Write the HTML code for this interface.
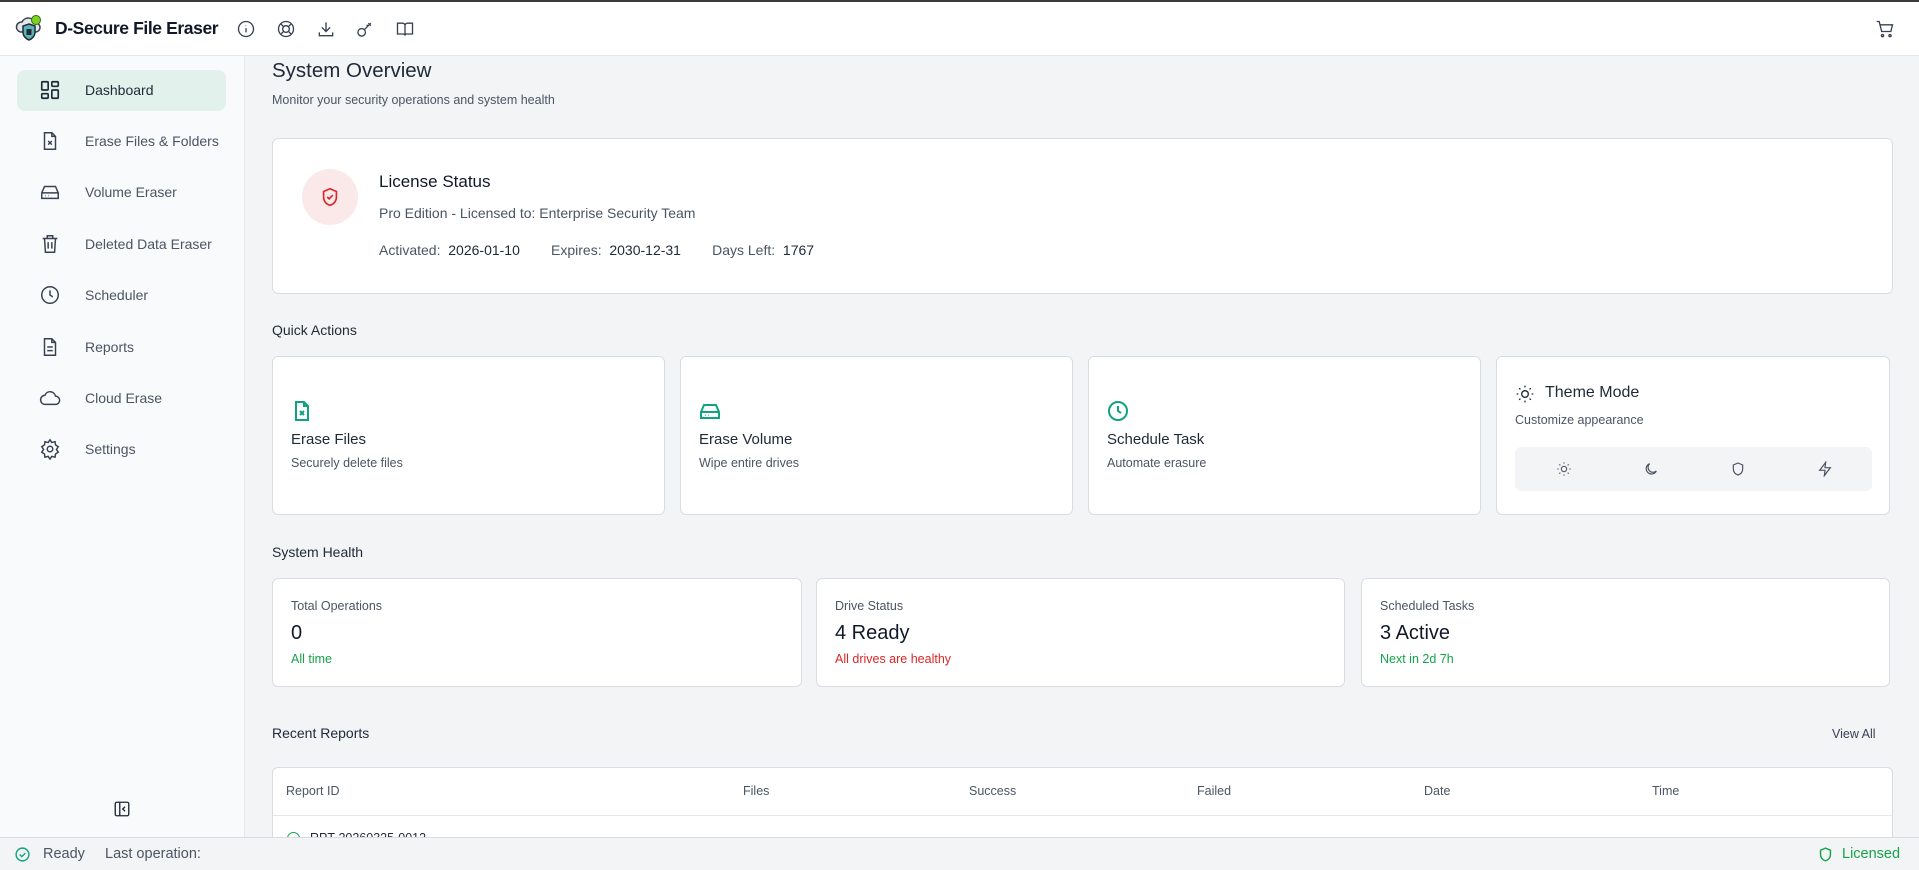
<!DOCTYPE html>
<html><head><meta charset="utf-8">
<style>
*{box-sizing:border-box;margin:0;padding:0}
html,body{width:1919px;height:870px;overflow:hidden}
body{background:#f3f4f6;font-family:"Liberation Sans",Arial,sans-serif;color:#1f2937;position:relative}
.abs{position:absolute}
svg{display:block}
.top{left:0;top:0;width:1919px;height:56px;background:#fff;border-top:2px solid #3a3a3a;border-bottom:1px solid #e5e7eb}
.side{left:0;top:56px;width:245px;height:781px;background:#f9fafb;border-right:1px solid #e5e7eb}
.nav{position:absolute;left:17px;width:209px;height:41px;border-radius:8px;font-size:14px;color:#4b5563}
.nav svg{position:absolute;left:22px;top:9px}
.nav span{position:absolute;left:68px;top:12px;white-space:nowrap;overflow:hidden;width:140px}
.card{position:absolute;background:#fff;border:1px solid #d9dde3;border-radius:6px}
.lbl{font-size:12.5px;color:#4b5563}
.status{left:0;top:837px;width:1919px;height:33px;background:#f3f4f6;border-top:1px solid #d9dde3;font-size:14.5px;color:#4b5563;z-index:5}
</style></head><body>

<div class="abs top">
  <svg class="abs" style="left:14px;top:12px" width="30" height="30" viewBox="0 0 30 30">
    <path d="M7 18a5 5 0 0 1 1-10 7 7 0 0 1 13 1 4.5 4.5 0 0 1 1 9z" fill="#e5e7eb" stroke="#374151" stroke-width="1.5"/>
    <path d="M15 10l6 2v6c0 4-3 7-6 8-3-1-6-4-6-8v-6z" fill="#5eb3b8" stroke="#1f2937" stroke-width="1.5"/>
    <rect x="12.5" y="15" width="5" height="6" fill="#1f2937"/>
    <circle cx="22" cy="6" r="4.5" fill="#7ed321" stroke="#2d6a1a" stroke-width="1"/>
  </svg>
  <div class="abs" style="left:55px;top:16px;font-size:17.5px;font-weight:bold;color:#111827;letter-spacing:-0.4px">D-Secure File Eraser</div>
  <svg class="abs" style="left:236px;top:17px" width="20" height="20" viewBox="0 0 24 24" fill="none" stroke="#374151" stroke-width="1.6"><circle cx="12" cy="12" r="9"/><path d="M12 11v5M12 8v.5"/></svg>
  <svg class="abs" style="left:276px;top:17px" width="20" height="20" viewBox="0 0 24 24" fill="none" stroke="#374151" stroke-width="1.6"><circle cx="12" cy="12" r="9"/><circle cx="12" cy="12" r="4"/><path d="M5.6 5.6l3.6 3.6M14.8 14.8l3.6 3.6M18.4 5.6l-3.6 3.6M9.2 14.8l-3.6 3.6"/></svg>
  <svg class="abs" style="left:316px;top:17px" width="20" height="20" viewBox="0 0 24 24" fill="none" stroke="#374151" stroke-width="1.6"><path d="M12 4v11M7 10l5 5 5-5M4 16v4h16v-4"/></svg>
  <svg class="abs" style="left:355px;top:17px" width="20" height="20" viewBox="0 0 24 24" fill="none" stroke="#374151" stroke-width="1.6"><circle cx="8" cy="16" r="4.5"/><path d="M11 13l8-8M16 5l3 3M14 7l2 2"/></svg>
  <svg class="abs" style="left:395px;top:17px" width="20" height="20" viewBox="0 0 24 24" fill="none" stroke="#374151" stroke-width="1.6"><path d="M3 5h6a3 3 0 0 1 3 3v12a2 2 0 0 0-2-2H3zM21 5h-6a3 3 0 0 0-3 3v12a2 2 0 0 1 2-2h7z"/></svg>
  <svg class="abs" style="left:1875px;top:17px" width="20" height="20" viewBox="0 0 24 24" fill="none" stroke="#374151" stroke-width="1.6"><path d="M2 3h3l3 12h11l2-8H6"/><circle cx="9" cy="20" r="1.3"/><circle cx="18" cy="20" r="1.3"/></svg>
</div>

<div class="abs side">
  <div class="nav" style="top:14px;background:#e3f1ec;color:#1f2937"><svg width="22" height="22" viewBox="0 0 24 24" fill="none" stroke="#1f2937" stroke-width="1.8"><rect x="3" y="3" width="7" height="9" rx="1"/><rect x="14" y="3" width="7" height="5" rx="1"/><rect x="14" y="12" width="7" height="9" rx="1"/><rect x="3" y="16" width="7" height="5" rx="1"/></svg><span>Dashboard</span></div>
  <div class="nav" style="top:65px"><svg width="22" height="22" viewBox="0 0 24 24" fill="none" stroke="#374151" stroke-width="1.6"><path d="M14 3H6v18h12V7zM14 3v4h4M10 12l4 4M14 12l-4 4"/></svg><span>Erase Files &amp; Folders</span></div>
  <div class="nav" style="top:116px"><svg width="22" height="22" viewBox="0 0 24 24" fill="none" stroke="#374151" stroke-width="1.6"><path d="M3 13l3-7h12l3 7v6H3zM3 13h18M7 16h.5M10 16h.5"/></svg><span>Volume Eraser</span></div>
  <div class="nav" style="top:168px"><svg width="22" height="22" viewBox="0 0 24 24" fill="none" stroke="#374151" stroke-width="1.6"><path d="M4 6h16M9 6V3h6v3M6 6l1 15h10l1-15M10 10v7M14 10v7"/></svg><span>Deleted Data Eraser</span></div>
  <div class="nav" style="top:219px"><svg width="22" height="22" viewBox="0 0 24 24" fill="none" stroke="#374151" stroke-width="1.6"><circle cx="12" cy="12" r="9"/><path d="M12 7v5l3 2"/></svg><span>Scheduler</span></div>
  <div class="nav" style="top:271px"><svg width="22" height="22" viewBox="0 0 24 24" fill="none" stroke="#374151" stroke-width="1.6"><path d="M14 3H6v18h12V7zM14 3v4h4M9 12h6M9 16h6"/></svg><span>Reports</span></div>
  <div class="nav" style="top:322px"><svg width="22" height="22" viewBox="0 0 24 24" fill="none" stroke="#374151" stroke-width="1.6"><path d="M7 19a5 5 0 0 1-.5-10A6 6 0 0 1 18 10a4.5 4.5 0 0 1 0 9z"/></svg><span>Cloud Erase</span></div>
  <div class="nav" style="top:373px"><svg width="22" height="22" viewBox="0 0 24 24" fill="none" stroke="#374151" stroke-width="1.6"><circle cx="12" cy="12" r="3"/><path d="M12 2l2 3 3.5-1 .5 3.5 3 2-2 3 2 3-3 2-.5 3.5-3.5-1-2 3-2-3-3.5 1-.5-3.5-3-2 2-3-2-3 3-2L6.5 4 10 5z"/></svg><span>Settings</span></div>
  <svg class="abs" style="left:113px;top:744px" width="18" height="18" viewBox="0 0 24 24" fill="none" stroke="#1f2937" stroke-width="1.8"><rect x="3" y="3" width="18" height="18" rx="2"/><path d="M9 3v18M16 9l-3 3 3 3"/></svg>
</div>

<div class="abs" style="left:272px;top:59px;font-size:20.5px;color:#1f2937">System Overview</div>
<div class="abs" style="left:272px;top:93px;font-size:12.5px;color:#4b5563">Monitor your security operations and system health</div>

<div class="card" style="left:272px;top:138px;width:1621px;height:156px">
  <div class="abs" style="left:29px;top:30px;width:56px;height:56px;border-radius:50%;background:#fbe9e9"></div>
  <svg class="abs" style="left:46px;top:47px" width="22" height="22" viewBox="0 0 24 24" fill="none" stroke="#dc2626" stroke-width="1.8"><path d="M12 3l7 3v6c0 4.5-3 8-7 9-4-1-7-4.5-7-9V6z"/><path d="M9 12l2 2 4-4"/></svg>
  <div class="abs" style="left:106px;top:33px;font-size:17px;color:#111827">License Status</div>
  <div class="abs" style="left:106px;top:66px;font-size:14px;color:#4b5563">Pro Edition - Licensed to: Enterprise Security Team</div>
  <div class="abs" style="left:106px;top:103px;font-size:14px;color:#4b5563;white-space:pre">Activated:  <span style="color:#1f2937">2026-01-10</span>        Expires:  <span style="color:#1f2937">2030-12-31</span>        Days Left:  <span style="color:#1f2937">1767</span></div>
</div>

<div class="abs" style="left:272px;top:322px;font-size:14px;color:#1f2937">Quick Actions</div>

<div class="card" style="left:272px;top:356px;width:393px;height:159px">
  <svg class="abs" style="left:17px;top:42px" width="24" height="24" viewBox="0 0 24 24" fill="none" stroke="#10a37f" stroke-width="2"><path d="M14 3H6v18h12V7zM14 3v4h4M10 12l4 4M14 12l-4 4"/></svg>
  <div class="abs" style="left:18px;top:74px;font-size:15px">Erase Files</div>
  <div class="abs lbl" style="left:18px;top:99px">Securely delete files</div>
</div>
<div class="card" style="left:680px;top:356px;width:393px;height:159px">
  <svg class="abs" style="left:17px;top:42px" width="24" height="24" viewBox="0 0 24 24" fill="none" stroke="#10a37f" stroke-width="2"><path d="M3 13l3-7h12l3 7v6H3zM3 13h18M7 16h.5M10 16h.5"/></svg>
  <div class="abs" style="left:18px;top:74px;font-size:15px">Erase Volume</div>
  <div class="abs lbl" style="left:18px;top:99px">Wipe entire drives</div>
</div>
<div class="card" style="left:1088px;top:356px;width:393px;height:159px">
  <svg class="abs" style="left:17px;top:42px" width="24" height="24" viewBox="0 0 24 24" fill="none" stroke="#10a37f" stroke-width="2"><circle cx="12" cy="12" r="9"/><path d="M12 7v5l3 2"/></svg>
  <div class="abs" style="left:18px;top:74px;font-size:15px">Schedule Task</div>
  <div class="abs lbl" style="left:18px;top:99px">Automate erasure</div>
</div>
<div class="card" style="left:1496px;top:356px;width:394px;height:159px">
  <svg class="abs" style="left:18px;top:27px" width="20" height="20" viewBox="0 0 24 24" fill="none" stroke="#1f2937" stroke-width="1.6"><circle cx="12" cy="12" r="4"/><path d="M12 2v2M12 20v2M2 12h2M20 12h2M5 5l1.5 1.5M17.5 17.5L19 19M5 19l1.5-1.5M17.5 6.5L19 5"/></svg>
  <div class="abs" style="left:48px;top:27px;font-size:16px">Theme Mode</div>
  <div class="abs lbl" style="left:18px;top:56px">Customize appearance</div>
  <div class="abs" style="left:18px;top:90px;width:357px;height:44px;background:#f3f4f6;border-radius:6px">
    <svg class="abs" style="left:41px;top:14px" width="16" height="16" viewBox="0 0 24 24" fill="none" stroke="#4b5563" stroke-width="1.6"><circle cx="12" cy="12" r="4"/><path d="M12 2v2M12 20v2M2 12h2M20 12h2M5 5l1.5 1.5M17.5 17.5L19 19M5 19l1.5-1.5M17.5 6.5L19 5"/></svg>
    <svg class="abs" style="left:128px;top:14px" width="16" height="16" viewBox="0 0 24 24" fill="none" stroke="#4b5563" stroke-width="1.8"><path d="M20 15A8 8 0 1 1 10 4a6.5 6.5 0 0 0 10 11z"/></svg>
    <svg class="abs" style="left:215px;top:14px" width="16" height="16" viewBox="0 0 24 24" fill="none" stroke="#4b5563" stroke-width="1.8"><path d="M12 3l7 3v6c0 4.5-3 8-7 9-4-1-7-4.5-7-9V6z"/></svg>
    <svg class="abs" style="left:302px;top:14px" width="16" height="16" viewBox="0 0 24 24" fill="none" stroke="#4b5563" stroke-width="1.8"><path d="M13 2L4 14h8l-1 8 9-12h-8z"/></svg>
  </div>
</div>

<div class="abs" style="left:272px;top:544px;font-size:14px">System Health</div>

<div class="card" style="left:272px;top:578px;width:530px;height:109px">
  <div class="abs lbl" style="left:18px;top:20px">Total Operations</div>
  <div class="abs" style="left:18px;top:43px;font-size:20px;color:#111827">0</div>
  <div class="abs" style="left:18px;top:73px;font-size:12.5px;color:#16a34a">All time</div>
</div>
<div class="card" style="left:816px;top:578px;width:529px;height:109px">
  <div class="abs lbl" style="left:18px;top:20px">Drive Status</div>
  <div class="abs" style="left:18px;top:43px;font-size:20px;color:#111827">4 Ready</div>
  <div class="abs" style="left:18px;top:73px;font-size:12.5px;color:#dc2626">All drives are healthy</div>
</div>
<div class="card" style="left:1361px;top:578px;width:529px;height:109px">
  <div class="abs lbl" style="left:18px;top:20px">Scheduled Tasks</div>
  <div class="abs" style="left:18px;top:43px;font-size:20px;color:#111827">3 Active</div>
  <div class="abs" style="left:18px;top:73px;font-size:12.5px;color:#16a34a">Next in 2d 7h</div>
</div>

<div class="abs" style="left:272px;top:725px;font-size:14px">Recent Reports</div>
<div class="abs" style="left:1832px;top:727px;font-size:12.5px;color:#374151">View All</div>

<div class="card" style="left:272px;top:767px;width:1621px;height:90px;font-size:12.5px;color:#4b5563">
  <div class="abs" style="left:13px;top:16px">Report ID</div>
  <div class="abs" style="left:470px;top:16px">Files</div>
  <div class="abs" style="left:696px;top:16px">Success</div>
  <div class="abs" style="left:924px;top:16px">Failed</div>
  <div class="abs" style="left:1151px;top:16px">Date</div>
  <div class="abs" style="left:1379px;top:16px">Time</div>
  <div class="abs" style="left:0;top:47px;width:100%;border-top:1px solid #e5e7eb"></div>
  <div class="abs" style="left:14px;top:64px;width:13px;height:13px;border:1.5px solid #16a34a;border-radius:50%"></div>
  <div class="abs" style="left:37px;top:63px;color:#1f2937">RPT-20260325-0012</div>
</div>

<div class="abs status">
  <svg class="abs" style="left:14px;top:8px" width="17" height="17" viewBox="0 0 24 24" fill="none" stroke="#10a37f" stroke-width="2"><circle cx="12" cy="12" r="9"/><path d="M8 12l3 3 5-5"/></svg>
  <div class="abs" style="left:43px;top:8px">Ready</div>
  <div class="abs" style="left:105px;top:8px">Last operation:</div>
  <svg class="abs" style="left:1817px;top:8px" width="17" height="17" viewBox="0 0 24 24" fill="none" stroke="#16a34a" stroke-width="2"><path d="M12 3l7 3v6c0 4.5-3 8-7 9-4-1-7-4.5-7-9V6z"/></svg>
  <div class="abs" style="left:1842px;top:8px;color:#16a34a">Licensed</div>
</div>
</body></html>
